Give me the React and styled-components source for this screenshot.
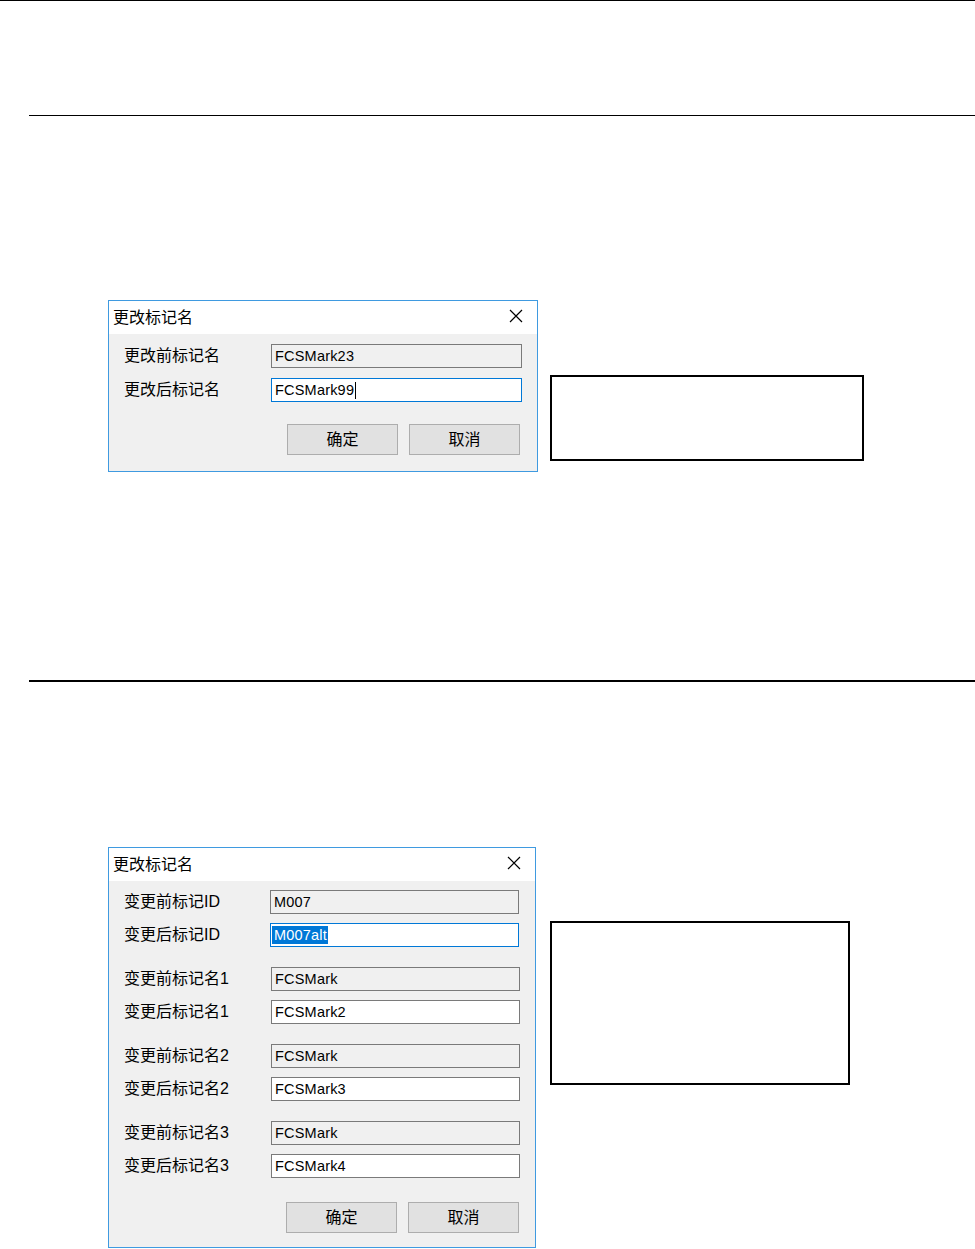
import React from 'react';
import styled, { createGlobalStyle } from 'styled-components';

const GlobalStyle = createGlobalStyle`
  html, body {
    margin: 0;
    padding: 0;
    background: #ffffff;
  }
  body {
    font-family: 'Liberation Sans', 'Noto Sans CJK SC', sans-serif;
    color: #000;
  }
`;

const Page = styled.div`
  width: 975px;
  min-height: 1249px;
  background: #ffffff;
  overflow: hidden;
`;

const Rule = styled.div`
  height: ${(p) => p.$thick || 1}px;
  margin-top: ${(p) => p.$top || 0}px;
  margin-left: ${(p) => p.$left || 0}px;
  background: #000;
`;

const Figure = styled.div`
  display: flex;
  align-items: flex-start;
  padding-top: ${(p) => p.$top}px;
  padding-left: 108px;
  gap: ${(p) => p.$gap}px;
`;

const Dialog = styled.div`
  width: ${(p) => p.$width}px;
  box-sizing: border-box;
  border: 1px solid #3f9ae0;
  background: #f0f0f0;
`;

const TitleBar = styled.div`
  height: 33px;
  box-sizing: border-box;
  background: #ffffff;
  display: flex;
  align-items: center;
  justify-content: space-between;
  padding: 0 14px 3px 4px;
  font-family: 'Noto Sans CJK SC', sans-serif;
  font-size: 16px;
  line-height: 1;
  color: #000;
`;

const Body = styled.div`
  padding: ${(p) => p.$pad};
  display: flex;
  flex-direction: column;
`;

const Group = styled.div`
  display: flex;
  flex-direction: column;
  gap: ${(p) => p.$gap}px;
  & + & {
    margin-top: 20px;
  }
`;

const Row = styled.div`
  display: grid;
  grid-template-columns: ${(p) => p.$label}px ${(p) => p.$field}px;
  align-items: center;
`;

const Label = styled.div`
  font-family: 'Liberation Sans', 'Noto Sans CJK SC', sans-serif;
  font-size: 16px;
  line-height: 20px;
  white-space: nowrap;
`;

const Field = styled.div`
  height: 24px;
  box-sizing: border-box;
  border: 1px solid ${(p) => (p.$focused ? '#0078d7' : '#7a7a7a')};
  background: ${(p) => (p.$readOnly ? '#f0f0f0' : '#ffffff')};
  padding-left: 3px;
  display: flex;
  align-items: center;
  font-family: 'Liberation Sans', sans-serif;
  font-size: 14.5px;
  letter-spacing: 0.2px;
  color: #000;
  white-space: nowrap;
`;

const Caret = styled.span`
  display: inline-block;
  width: 1px;
  height: 17px;
  background: #000;
  margin-left: 1px;
`;

const Selected = styled.span`
  background: #0078d7;
  color: #fff;
  margin-left: -2px;
  padding: 1px 1px 1px 2px;
`;

const Buttons = styled.div`
  display: flex;
  justify-content: flex-end;
  gap: 11px;
  margin-top: ${(p) => p.$top}px;
  padding-right: ${(p) => p.$right}px;
`;

const Button = styled.div`
  width: 111px;
  height: 31px;
  box-sizing: border-box;
  border: 1px solid #adadad;
  background: #e1e1e1;
  display: flex;
  align-items: center;
  justify-content: center;
  padding-bottom: 3px;
  font-family: 'Noto Sans CJK SC', sans-serif;
  font-size: 16px;
  line-height: 1;
  color: #000;
`;

const Note = styled.div`
  width: ${(p) => p.$width}px;
  height: ${(p) => p.$height}px;
  margin-top: ${(p) => p.$top}px;
  box-sizing: border-box;
  border: 2px solid #000;
  background: #fff;
`;

function CloseIcon() {
  return (
    <svg width="14" height="14" viewBox="0 0 14 14">
      <path d="M1 1 L13 13 M13 1 L1 13" stroke="#000" strokeWidth="1.2" fill="none" />
    </svg>
  );
}

function FieldRow({ label, value, readOnly, focused, caret, selected, labelW, fieldW }) {
  return (
    <Row $label={labelW} $field={fieldW}>
      <Label>{label}</Label>
      <Field $readOnly={readOnly} $focused={focused}>
        {selected ? <Selected>{value}</Selected> : value}
        {caret && <Caret />}
      </Field>
    </Row>
  );
}

export default function App() {
  const pairs = [
    ['变更前标记名1', 'FCSMark', '变更后标记名1', 'FCSMark2'],
    ['变更前标记名2', 'FCSMark', '变更后标记名2', 'FCSMark3'],
    ['变更前标记名3', 'FCSMark', '变更后标记名3', 'FCSMark4'],
  ];

  return (
    <Page>
      <GlobalStyle />
      <Rule />
      <Rule $top={114} $left={29} />

      <Figure $top={184} $gap={12}>
        <Dialog $width={430}>
          <TitleBar>
            <span>更改标记名</span>
            <CloseIcon />
          </TitleBar>
          <Body $pad="10px 14px 16px 15px">
            <Group $gap={10}>
              <FieldRow label="更改前标记名" value="FCSMark23" readOnly labelW={147} fieldW={251} />
              <FieldRow label="更改后标记名" value="FCSMark99" focused caret labelW={147} fieldW={251} />
            </Group>
            <Buttons $top={22} $right={3}>
              <Button>确定</Button>
              <Button>取消</Button>
            </Buttons>
          </Body>
        </Dialog>
        <Note $width={314} $height={86} $top={75} />
      </Figure>

      <Rule $top={208} $left={29} $thick={2} />

      <Figure $top={165} $gap={14}>
        <Dialog $width={428}>
          <TitleBar>
            <span>更改标记名</span>
            <CloseIcon />
          </TitleBar>
          <Body $pad="9px 15px 14px 15px">
            <Group $gap={9}>
              <FieldRow label="变更前标记ID" value="M007" readOnly labelW={146} fieldW={249} />
              <FieldRow label="变更后标记ID" value="M007alt" focused selected labelW={146} fieldW={249} />
            </Group>
            {pairs.map(([b, bv, a, av]) => (
              <Group key={b} $gap={9}>
                <FieldRow label={b} value={bv} readOnly labelW={147} fieldW={249} />
                <FieldRow label={a} value={av} labelW={147} fieldW={249} />
              </Group>
            ))}
            <Buttons $top={24} $right={1}>
              <Button>确定</Button>
              <Button>取消</Button>
            </Buttons>
          </Body>
        </Dialog>
        <Note $width={300} $height={164} $top={74} />
      </Figure>
    </Page>
  );
}
